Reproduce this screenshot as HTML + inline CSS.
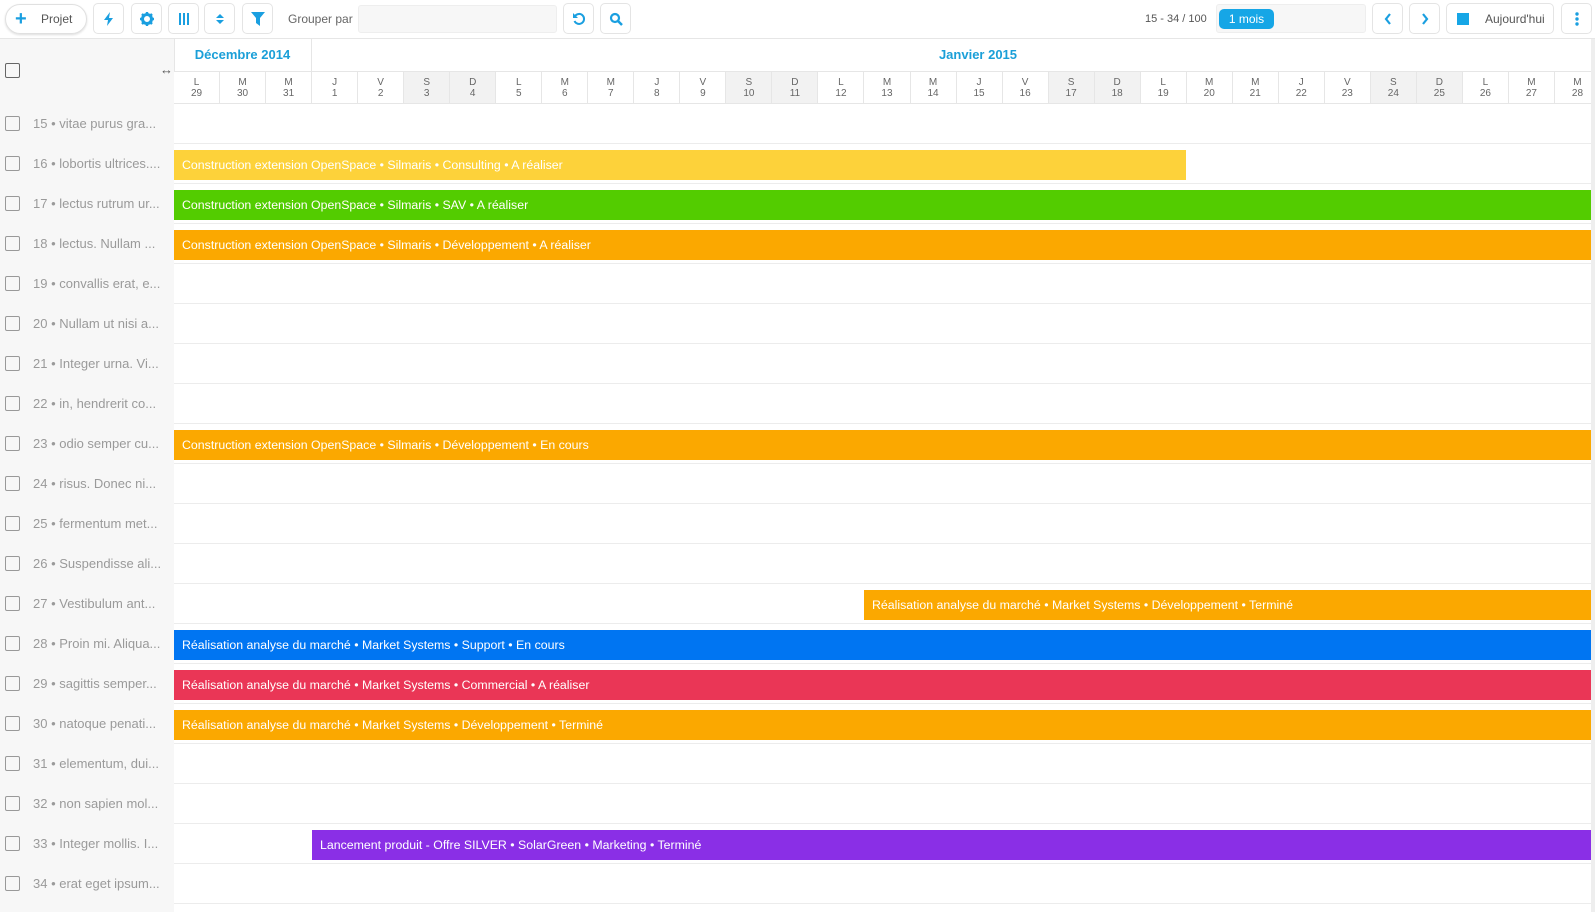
<!DOCTYPE html>
<html><head><meta charset="utf-8"><style>
*{box-sizing:border-box;margin:0;padding:0}
body{width:1595px;height:912px;overflow:hidden;font-family:"Liberation Sans",sans-serif;background:#fff;position:relative;color:#555}
.tb{position:absolute;top:0;left:0;width:1595px;height:39px;background:#fff;border-bottom:1px solid #e6e6e6}
.btn{position:absolute;top:3px;height:31px;width:31px;border:1px solid #e4e4e4;border-radius:5px;background:#fff;display:flex;align-items:center;justify-content:center;color:#1a9fe0}
.lp{position:absolute;left:0;top:39px;width:174px;height:873px;background:#f7f7f7}
.mh{position:absolute;top:39px;height:32px;line-height:32px;text-align:center;color:#1a9fd8;font-weight:bold;font-size:13px}
.days{position:absolute;left:174px;top:71px;width:1417px;height:33px;display:flex;overflow:hidden;border-top:1px solid #e6e6e6;border-bottom:1px solid #e6e6e6}
.days div{flex:0 0 46.04px;border-right:1px solid #e6e6e6;text-align:center;font-size:10px;color:#666;line-height:11px;padding-top:5px}
.days .we{background:#f2f2f2}
.row{position:absolute;left:0;width:1591px;height:40px;border-bottom:1px solid #ececec}
.row .l{position:absolute;left:0;top:0;width:174px;height:40px;background:#f7f7f7;font-size:13px;color:#9a9a9a;line-height:40px;padding-left:33px;white-space:nowrap}
.row .cb{position:absolute;left:5px;top:12px;width:15px;height:15px;border:1.5px solid #999;border-radius:2px}
.bar{position:absolute;top:6px;height:30px;line-height:30px;color:#fff;font-size:12.35px;padding-left:8px;white-space:nowrap;letter-spacing:0}
</style></head><body>
<div class="tb">
 <div style="position:absolute;left:5px;top:4px;width:82px;height:30px;border:1px solid #e0e0e0;border-radius:15px;box-shadow:0 1px 2px #ddd;font-size:12px;color:#555;line-height:28px;padding-left:35px">Projet<span style="position:absolute;left:9px;top:0;color:#1a9fe0;font-size:20px;font-weight:bold">+</span></div>
 <div class="btn" style="left:93px"><svg width="12" height="14" viewBox="0 0 12 14"><path d="M7 0L1 8h4l-1 6 6-8H6z" fill="#1a9fe0"/></svg></div>
 <div class="btn" style="left:131px"><svg width="14" height="14" viewBox="0 0 14 14"><circle cx="7" cy="7" r="4.5" fill="none" stroke="#1a9fe0" stroke-width="3"/><path d="M7 0v3M7 11v3M0 7h3M11 7h3M2 2l2 2M10 10l2 2M2 12l2-2M10 4l2-2" stroke="#1a9fe0" stroke-width="2.4"/></svg></div>
 <div class="btn" style="left:168px"><svg width="12" height="12"><path d="M2 0v12M6 0v12M10 0v12" stroke="#1a9fe0" stroke-width="2"/></svg></div>
 <div class="btn" style="left:204px"><svg width="8" height="12"><path d="M0 5L4 1 8 5zM0 7l4 4 4-4z" fill="#1a9fe0"/></svg></div>
 <div class="btn" style="left:242px"><svg width="14" height="14"><path d="M0 0h14L9 6v8L5 11V6z" fill="#1a9fe0"/></svg></div>
 <div style="position:absolute;left:288px;top:12px;font-size:12px;color:#666">Grouper par</div>
 <div style="position:absolute;left:358px;top:5px;width:199px;height:28px;background:#f7f7f7;border:1px solid #eee;border-radius:3px"></div>
 <div class="btn" style="left:563px"><svg width="14" height="14"><path d="M3 4A5 5 0 1 1 2.5 9" fill="none" stroke="#1a9fe0" stroke-width="2"/><path d="M1 1v5h5z" fill="#1a9fe0"/></svg></div>
 <div class="btn" style="left:600px"><svg width="14" height="14"><circle cx="6" cy="6" r="4" fill="none" stroke="#1a9fe0" stroke-width="2.2"/><path d="M9 9l4 4" stroke="#1a9fe0" stroke-width="2.5"/></svg></div>
 <div style="position:absolute;left:1145px;top:13px;font-size:11px;color:#555">15 - 34 / 100</div>
 <div style="position:absolute;left:1216px;top:4px;width:150px;height:29px;background:#f7f7f7;border:1px solid #eee;border-radius:3px"></div>
 <div style="position:absolute;left:1219px;top:9px;width:55px;height:20px;background:#16a6e6;border-radius:5px;color:#fff;font-size:12px;text-align:center;line-height:20px">1 mois</div>
 <div class="btn" style="left:1372px"><svg width="8" height="12"><path d="M6 1L2 6l4 5" fill="none" stroke="#1a9fe0" stroke-width="2.2"/></svg></div>
 <div class="btn" style="left:1409px"><svg width="8" height="12"><path d="M2 1l4 5-4 5" fill="none" stroke="#1a9fe0" stroke-width="2.2"/></svg></div>
 <div class="btn" style="left:1446px;width:108px;justify-content:flex-start;padding-left:10px;font-size:12px;color:#555"><span style="display:inline-block;width:12px;height:12px;background:#16a6e6;margin-right:16px"></span>Aujourd'hui</div>
 <div class="btn" style="left:1561px"><svg width="4" height="14"><circle cx="2" cy="2" r="1.7" fill="#1a9fe0"/><circle cx="2" cy="7" r="1.7" fill="#1a9fe0"/><circle cx="2" cy="12" r="1.7" fill="#1a9fe0"/></svg></div>
</div>
<div class="lp"></div>
<div style="position:absolute;left:5px;top:63px;width:15px;height:15px;border:1.5px solid #666;border-radius:2px"></div>
<div style="position:absolute;left:160px;top:62px;font-size:13px;color:#555">↔</div>
<div style="position:absolute;left:174px;top:39px;width:1px;height:32px;background:#e6e6e6"></div>
<div class="mh" style="left:174px;width:138px;border-right:1px solid #e6e6e6">Décembre 2014</div>
<div class="mh" style="left:312px;width:1332px">Janvier 2015</div>
<div class="days">
<div>L<br>29</div><div>M<br>30</div><div>M<br>31</div><div>J<br>1</div><div>V<br>2</div><div class="we">S<br>3</div><div class="we">D<br>4</div><div>L<br>5</div><div>M<br>6</div><div>M<br>7</div><div>J<br>8</div><div>V<br>9</div><div class="we">S<br>10</div><div class="we">D<br>11</div><div>L<br>12</div><div>M<br>13</div><div>M<br>14</div><div>J<br>15</div><div>V<br>16</div><div class="we">S<br>17</div><div class="we">D<br>18</div><div>L<br>19</div><div>M<br>20</div><div>M<br>21</div><div>J<br>22</div><div>V<br>23</div><div class="we">S<br>24</div><div class="we">D<br>25</div><div>L<br>26</div><div>M<br>27</div><div>M<br>28</div>
</div>
<div style="position:absolute;left:1591px;top:39px;width:4px;height:873px;background:#eee"></div>

<div class="row" style="top:104px"><div class="l"><span class="cb"></span>15 • vitae purus gra...</div></div>
<div class="row" style="top:144px"><div class="l"><span class="cb"></span>16 • lobortis ultrices....</div><div class="bar" style="left:174px;width:1012px;background:#fdd23a">Construction extension OpenSpace • Silmaris • Consulting • A réaliser</div></div>
<div class="row" style="top:184px"><div class="l"><span class="cb"></span>17 • lectus rutrum ur...</div><div class="bar" style="left:174px;width:1417px;background:#53cc00">Construction extension OpenSpace • Silmaris • SAV • A réaliser</div></div>
<div class="row" style="top:224px"><div class="l"><span class="cb"></span>18 • lectus. Nullam ...</div><div class="bar" style="left:174px;width:1417px;background:#fba800">Construction extension OpenSpace • Silmaris • Développement • A réaliser</div></div>
<div class="row" style="top:264px"><div class="l"><span class="cb"></span>19 • convallis erat, e...</div></div>
<div class="row" style="top:304px"><div class="l"><span class="cb"></span>20 • Nullam ut nisi a...</div></div>
<div class="row" style="top:344px"><div class="l"><span class="cb"></span>21 • Integer urna. Vi...</div></div>
<div class="row" style="top:384px"><div class="l"><span class="cb"></span>22 • in, hendrerit co...</div></div>
<div class="row" style="top:424px"><div class="l"><span class="cb"></span>23 • odio semper cu...</div><div class="bar" style="left:174px;width:1417px;background:#fba800">Construction extension OpenSpace • Silmaris • Développement • En cours</div></div>
<div class="row" style="top:464px"><div class="l"><span class="cb"></span>24 • risus. Donec ni...</div></div>
<div class="row" style="top:504px"><div class="l"><span class="cb"></span>25 • fermentum met...</div></div>
<div class="row" style="top:544px"><div class="l"><span class="cb"></span>26 • Suspendisse ali...</div></div>
<div class="row" style="top:584px"><div class="l"><span class="cb"></span>27 • Vestibulum ant...</div><div class="bar" style="left:864px;width:727px;background:#fba800">Réalisation analyse du marché • Market Systems • Développement • Terminé</div></div>
<div class="row" style="top:624px"><div class="l"><span class="cb"></span>28 • Proin mi. Aliqua...</div><div class="bar" style="left:174px;width:1417px;background:#0075f2">Réalisation analyse du marché • Market Systems • Support • En cours</div></div>
<div class="row" style="top:664px"><div class="l"><span class="cb"></span>29 • sagittis semper...</div><div class="bar" style="left:174px;width:1417px;background:#ea3656">Réalisation analyse du marché • Market Systems • Commercial • A réaliser</div></div>
<div class="row" style="top:704px"><div class="l"><span class="cb"></span>30 • natoque penati...</div><div class="bar" style="left:174px;width:1417px;background:#fba800">Réalisation analyse du marché • Market Systems • Développement • Terminé</div></div>
<div class="row" style="top:744px"><div class="l"><span class="cb"></span>31 • elementum, dui...</div></div>
<div class="row" style="top:784px"><div class="l"><span class="cb"></span>32 • non sapien mol...</div></div>
<div class="row" style="top:824px"><div class="l"><span class="cb"></span>33 • Integer mollis. I...</div><div class="bar" style="left:312px;width:1279px;background:#8a2fe6">Lancement produit - Offre SILVER • SolarGreen • Marketing • Terminé</div></div>
<div class="row" style="top:864px"><div class="l"><span class="cb"></span>34 • erat eget ipsum...</div></div>
</body></html>
